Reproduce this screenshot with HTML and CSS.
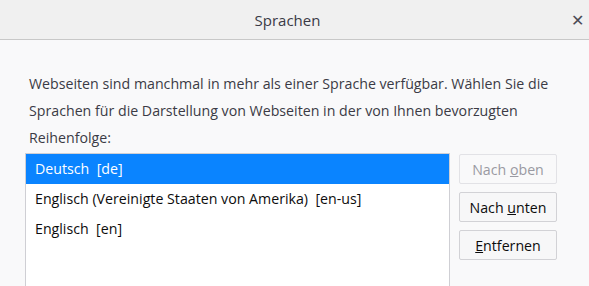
FILE: index.html
```html
<!DOCTYPE html>
<html lang="de">
<head>
  <meta charset="UTF-8" />
  <meta name="viewport" content="width=device-width, initial-scale=1.0"/>
  <title>Sprachen</title>
  <link rel="stylesheet" href="styles.css">
</head>
<body>

  <div class="dialog">
    <div class="titlebar">
      <span class="title">Sprachen</span>
      <span class="close">&#x2715;</span>
    </div>

    <div class="content">
      <p class="intro">Webseiten sind manchmal in mehr als einer Sprache verfügbar. Wählen Sie die Sprachen für die Darstellung von Webseiten in der von Ihnen bevorzugten Reihenfolge:</p>

      <div class="row">
        <ul class="langs">
          <li class="selected">Deutsch&nbsp; [de]</li>
          <li>Englisch (Vereinigte Staaten von Amerika)&nbsp; [en-us]</li>
          <li>Englisch&nbsp; [en]</li>
        </ul>

        <div class="actions">
          <button disabled>Nach <u>o</u>ben</button>
          <button>Nach <u>u</u>nten</button>
          <button><u>E</u>ntfernen</button>
        </div>
      </div>
    </div>
  </div>

</body>
</html>
```

FILE: styles.css
```css
* {
  box-sizing: border-box;
}
body {
  margin: 0;
  font-family: 'Open Sans', 'Noto Sans', sans-serif;
  background: #f9f9fa;
  color: #3b3b45;
  overflow: hidden;
}
.titlebar {
  height: 40px;
  background: #f0f0f0;
  border-bottom: 1px solid #c8c8c8;
  display: flex;
  align-items: center;
  justify-content: center;
  position: relative;
}
.title {
  font-size: 15px;
  color: #3a3a46;
  margin-left: -14px;
}
.close {
  position: absolute;
  right: 5px;
  top: 9px;
  font-size: 16px;
  color: #4a4a55;
}
.content {
  padding: 30px 0 0 25px;
}
.intro {
  margin: 0 0 0 4px;
  font-size: 14.2px;
  line-height: 27px;
  width: 540px;
}
.row {
  display: flex;
  align-items: flex-start;
  margin-top: 2px;
}
.langs {
  list-style: none;
  margin: 0;
  padding: 0;
  width: 425px;
  height: 140px;
  background: #fff;
  border: 1px solid #cfcfd4;
}
.langs li {
  height: 30px;
  line-height: 30px;
  padding-left: 9px;
  font-size: 14.2px;
  color: #0c0c0d;
}
.langs li.selected {
  background: #0a84ff;
  color: #fff;
}
.actions {
  display: flex;
  flex-direction: column;
  gap: 8px;
  margin: 1px 0 0 9px;
}
.actions button {
  width: 98px;
  height: 30px;
  font-family: inherit;
  font-size: 14.2px;
  color: #0c0c0d;
  background: #f7f7f8;
  border: 1px solid #d2d2d6;
  border-radius: 2px;
  padding: 0;
}
.actions button:disabled {
  color: #9a9aa2;
  background: #f9f9fa;
  border-color: #e2e2e6;
}
```
